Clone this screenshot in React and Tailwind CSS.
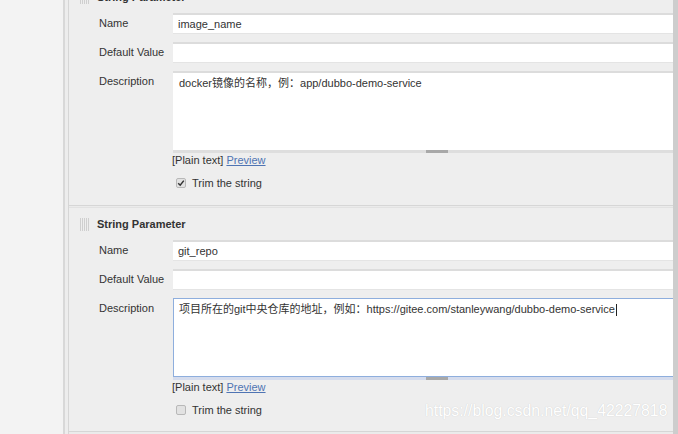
import React from 'react'

function Handle() {
  return (
    <div className="flex gap-[1px] h-[13px] w-[9px]">
      <span className="w-[1px] h-full bg-[#cfcfcf]" />
      <span className="w-[1px] h-full bg-[#cfcfcf]" />
      <span className="w-[1px] h-full bg-[#cfcfcf]" />
      <span className="w-[1px] h-full bg-[#cfcfcf]" />
      <span className="w-[1px] h-full bg-[#cfcfcf]" />
    </div>
  )
}

function Field({ label, value }) {
  return (
    <div className="flex items-center h-[21px]">
      <div className="w-[104px] pl-[30px] shrink-0 whitespace-nowrap">{label}</div>
      <div className="flex-1 h-full bg-white border-t-2 border-[#dcdcdc] border-b border-b-[#e4e4e4] flex items-center pl-[5px]">
        {value}
      </div>
    </div>
  )
}

function Panel({ name, desc, focused, checked, className = '' }) {
  return (
    <div className={`bg-[#eeeeee] border-b border-[#d6d6d6] h-[225px] flex flex-col ${className}`}>
      {/* header */}
      <div className="h-[32px] flex items-center pl-[11px] gap-[8px]">
        <Handle />
        <span className="font-bold">String Parameter</span>
      </div>

      <Field label="Name" value={name} />
      <div className="mt-[8px]">
        <Field label="Default Value" value="" />
      </div>

      {/* description */}
      <div className="flex mt-[8px]">
        <div className="w-[104px] pl-[30px] shrink-0 pt-[2px]">Description</div>
        <div className="flex-1 flex flex-col">
          <div
            className={
              focused
                ? 'h-[79px] bg-white border border-[#8eaedd] border-r-0 pl-[5px] pt-[2px] whitespace-nowrap overflow-hidden'
                : 'h-[79px] bg-white border-t-2 border-[#dcdcdc] pl-[6px] pt-[2px] whitespace-nowrap overflow-hidden'
            }
          >
            {desc}
            {focused && <span className="inline-block w-[1px] h-[12px] bg-[#222] align-middle ml-[1px]" />}
          </div>
          <div className={`h-[3px] ${focused ? 'bg-[#d5dced]' : 'bg-[#dedede]'}`}>
            <div className="ml-[253px] w-[22px] h-[3px] bg-[#a8a8a8]" />
          </div>
          <div className="h-[12px] mt-[1px] leading-[12px] -ml-[1px] whitespace-nowrap">
            [Plain text] <span className="text-[#4f74b3] underline">Preview</span>
          </div>
          <div className="flex items-center h-[16px] mt-[9px] pl-[3px] gap-[6px]">
            <span className="w-[10px] h-[10px] rounded-[2px] border border-[#b8b8b8] bg-[#e2e2e2] flex items-center justify-center">
              {checked && (
                <svg width="8" height="8" viewBox="0 0 8 8">
                  <path d="M1.2 4.2 L3.2 6.2 L6.8 1.6" stroke="#333" strokeWidth="1.5" fill="none" />
                </svg>
              )}
            </span>
            <span>Trim the string</span>
          </div>
        </div>
      </div>
    </div>
  )
}

export default function App() {
  return (
    <div className="relative w-[678px] h-[434px] overflow-hidden flex bg-[#f3f3f3] text-[#333] text-[11px] font-['Liberation_Sans','Noto_Sans_CJK_SC',sans-serif]">
      <div className="w-[63px] shrink-0 bg-[#f3f3f3]" />
      <div className="w-[2px] shrink-0 bg-[#d8d8d8]" />
      <div className="w-[3px] shrink-0 bg-[#ededed]" />
      <div className="w-[1px] shrink-0 bg-[#d6d6d6]" />

      <div className="flex-1 flex flex-col bg-[#ebebeb]">
        <Panel
          className="-mt-[19px]"
          name="image_name"
          desc="docker镜像的名称，例：app/dubbo-demo-service"
          checked
        />
        <Panel
          className="mt-[1px] border-t border-t-[#e2e2e2]"
          name="git_repo"
          desc="项目所在的git中央仓库的地址，例如：https://gitee.com/stanleywang/dubbo-demo-service"
          focused
        />
      </div>

      <div className="w-[5px] shrink-0 bg-[#cdcdcd]" />

      <div className="absolute left-[425px] top-[402px] text-[15.8px] leading-[18px] text-white [text-shadow:0_0_1px_#c4c4c4] whitespace-nowrap">
        https://blog.csdn.net/qq_42227818
      </div>
    </div>
  )
}
